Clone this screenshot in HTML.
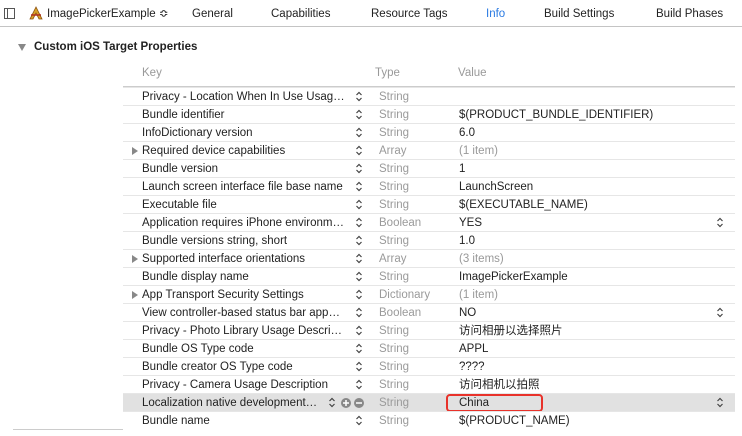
<!DOCTYPE html>
<html><head><meta charset="utf-8"><style>
*{margin:0;padding:0;box-sizing:border-box}
body{width:742px;height:436px;background:#fff;font-family:"Liberation Sans","Noto Sans CJK SC",sans-serif;font-size:11.5px;color:#222;position:relative;overflow:hidden}
.t{position:absolute;white-space:nowrap;line-height:14px}
.top{position:absolute;left:0;top:0;width:742px;height:27px;border-bottom:1px solid #c4c4c4}
.row{position:absolute;left:123px;width:612px;height:18px;border-top:1px solid #e6e6e6}
.row span{position:absolute;top:2px;white-space:nowrap;line-height:14px;height:14px}
.k{left:19px}.ty{left:256px;color:#9a9a9a}.v{left:336px}
.st{position:absolute;top:2px;width:8px;height:13px}
.exp{position:absolute;left:9px;top:5px;width:0;height:0;border-left:6px solid #888;border-top:4px solid transparent;border-bottom:4px solid transparent}
.hl{background:#e1e1e1}
.gray{color:#999!important}
</style></head><body>
<div class="top">
<div style="position:absolute;left:4px;top:8px;width:11px;height:11px;border:1px solid #555"><div style="position:absolute;left:2px;top:0;width:1px;height:9px;background:#555"></div></div>
<svg style="position:absolute;left:29px;top:6px" width="14" height="14"><path d="M7 1L1 13h3l3-6 3 6h3z" fill="#d8a028" stroke="#8a5010" stroke-width=".8"/><path d="M2 9h10" stroke="#b03020" stroke-width="1.5"/></svg>
<span class="t" style="left:47px;top:7px">ImagePickerExample ≎</span>
<span class="t" style="left:192px;top:7px">General</span>
<span class="t" style="left:271px;top:7px">Capabilities</span>
<span class="t" style="left:371px;top:7px">Resource Tags</span>
<span class="t" style="left:486px;top:7px;color:#2a7ae2">Info</span>
<span class="t" style="left:544px;top:7px">Build Settings</span>
<span class="t" style="left:656px;top:7px">Build Phases</span>
</div>
<div style="position:absolute;left:18px;top:44px;width:0;height:0;border-top:7px solid #888;border-left:4px solid transparent;border-right:4px solid transparent"></div>
<span class="t" style="left:34px;top:40px;font-weight:bold">Custom iOS Target Properties</span>
<span class="t" style="left:142px;top:66px;color:#999">Key</span>
<span class="t" style="left:375px;top:66px;color:#999">Type</span>
<span class="t" style="left:458px;top:66px;color:#999">Value</span>
<div style="position:absolute;left:123px;top:86px;width:612px;height:1px;background:#ccc"></div>
<div id="rows"></div>
<div style="position:absolute;left:13px;top:429px;width:110px;height:1px;background:#ccc"></div>
<script>
var d=[["Privacy - Location When In Use Usag…","String","",0],
["Bundle identifier","String","$(PRODUCT_BUNDLE_IDENTIFIER)",0],
["InfoDictionary version","String","6.0",0],
["Required device capabilities","Array","(1 item)",1],
["Bundle version","String","1",0],
["Launch screen interface file base name","String","LaunchScreen",0],
["Executable file","String","$(EXECUTABLE_NAME)",0],
["Application requires iPhone environm…","Boolean","YES",2],
["Bundle versions string, short","String","1.0",0],
["Supported interface orientations","Array","(3 items)",1],
["Bundle display name","String","ImagePickerExample",0],
["App Transport Security Settings","Dictionary","(1 item)",1],
["View controller-based status bar app…","Boolean","NO",2],
["Privacy - Photo Library Usage Descri…","String","访问相册以选择照片",0],
["Bundle OS Type code","String","APPL",0],
["Bundle creator OS Type code","String","????",0],
["Privacy - Camera Usage Description","String","访问相机以拍照",0],
["Localization native development…","String","China",3],
["Bundle name","String","$(PRODUCT_NAME)",0]];
var sv='<svg class="st" style="left:LEFTpx" viewBox="0 0 8 13"><path d="M1.5 5L4 2.5L6.5 5M1.5 8L4 10.5L6.5 8" fill="none" stroke="#444" stroke-width="1.2"/></svg>';
var h='';
d.forEach(function(r,i){
var top=87+i*18;
h+='<div class="row'+(r[3]==3?' hl':'')+'" style="top:'+top+'px">';
if(r[3]==1)h+='<div class="exp"></div>';
h+='<span class="k">'+r[0]+'</span>';
if(r[3]==3){h+=sv.replace('LEFT',205)+'<svg style="position:absolute;left:217px;top:3px" width="26" height="12"><circle cx="6" cy="6" r="5" fill="#888"/><path d="M6 3v6M3 6h6" stroke="#fff" stroke-width="1.5"/><circle cx="19" cy="6" r="5" fill="#888"/><path d="M16 6h6" stroke="#fff" stroke-width="1.5"/></svg>';}
else h+=sv.replace('LEFT',232);
h+='<span class="ty">'+r[1]+'</span>';
h+='<span class="v'+((r[3]==1)?' gray':'')+'">'+r[2]+'</span>';
if(r[3]>=2)h+=sv.replace('LEFT',593);
if(r[3]==3)h+='<div style="position:absolute;left:323px;top:0px;width:97px;height:18px;border:2px solid #e8322a;border-radius:4px"></div>';
h+='</div>';});
document.getElementById('rows').innerHTML=h;
</script>
</body></html>
